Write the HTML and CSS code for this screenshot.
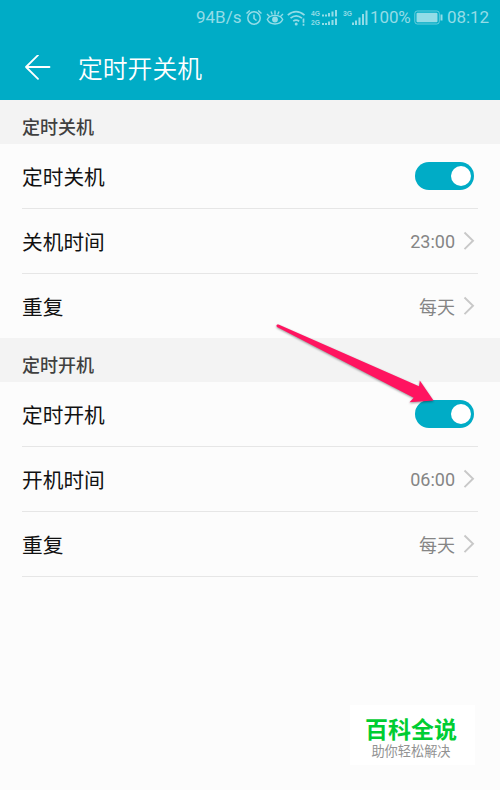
FILE: index.html
```
<!DOCTYPE html>
<html lang="zh-CN">
<head>
<meta charset="utf-8">
<title>定时开关机</title>
<link rel="stylesheet" href="styles.css">
</head>
<body>
<header class="top">
  <div class="status">
    <span class="speed">94B/s</span>
    <svg class="alarm" width="18" height="20" viewBox="0 0 18 20" fill="none" stroke="currentColor" stroke-width="1.5"><circle cx="9" cy="10" r="6.2"/><path d="M9 6.500v4l2.500 2M1.500 5.500l3.300-3M16.500 5.500l-3.300-3"/></svg>
    <svg class="eye" width="18" height="20" viewBox="0 0 18 20" fill="none" stroke="currentColor" stroke-width="1.400"><path d="M1.300 11.500C4 6 14 6 16.700 11.500C14 17.500 4 17.500 1.300 11.500ZM1 6l2.500 2.500M5 3.500l1.300 3M9 2.500v4M13 3.500l-1.300 3M17 6l-2.500 2.500"/><circle cx="9" cy="11.500" r="2.900" fill="currentColor" stroke="none"/></svg>
    <svg class="wifi" width="20" height="20" viewBox="0 0 20 20" fill="none" stroke="currentColor" stroke-width="1.700"><path d="M.8 7.200Q9 .2 17.500 7.200M3.500 10.200Q9 5.600 15 10.200M6.200 13.200Q9 11 12.200 13.200"/><circle cx="9.200" cy="16" r="1.500" fill="currentColor" stroke="none"/><path d="M16.500 10.500v4.200M16.500 15.700v2"/></svg>
    <svg class="dual" width="28" height="20" viewBox="0 0 28 20" fill="currentColor"><text class="net" x="0" y="8.300" textLength="9" lengthAdjust="spacingAndGlyphs">4G</text><text class="net" x="0" y="17.300" textLength="9" lengthAdjust="spacingAndGlyphs">2G</text><path d="M11 6.500h2v2h-2zM14 6.500h2v2h-2zM17 5h2v3.500h-2zM20.500 3.500h2v5h-2zM24 2h2v6.500h-2zM11 15h2v2h-2zM14 15h2v2h-2zM17 13.500h2V17h-2zM20.500 12h2v5h-2zM24 10.500h2V17h-2z"/></svg>
    <svg class="single" width="26" height="20" viewBox="0 0 26 20" fill="currentColor"><text class="net" x="0" y="8" textLength="9" lengthAdjust="spacingAndGlyphs">3G</text><path d="M9 14.500h2v2.500H9zM12 12.500h2V17h-2zM15.500 9.500h2V17h-2zM19 6h2v11h-2zM22.500 2.500h2V17h-2z"/></svg>
    <span class="percent">100%</span>
    <svg class="battery" width="30" height="20" viewBox="0 0 30 20" fill="none"><rect x=".8" y="3" width="24.500" height="13" rx="2.500" stroke="currentColor" stroke-width="1" opacity=".7"/><rect x="2.500" y="4.700" width="21" height="9.600" rx="1" fill="currentColor"/><path d="M26.500 6.500h2v6h-2z" fill="currentColor"/></svg>
    <span class="clock">08:12</span>
  </div>
  <div class="bar">
    <svg class="back" width="26" height="26" viewBox="0 0 26 26" fill="none" stroke="#fff" stroke-width="1.800" stroke-linecap="round" stroke-linejoin="round"><path d="M13 .2L1 12l12 11.800M1 12h23.500"/></svg>
    <h1>定时开关机</h1>
  </div>
</header>
<main>
  <section>
    <h2>定时关机</h2>
    <div class="row"><span class="label">定时关机</span><span class="toggle"></span></div>
    <div class="row"><span class="label">关机时间</span><span class="value">23:00</span><svg class="chev" width="12" height="20" viewBox="0 0 12 20"><path d="M1.500 1.500l8.500 8.300-8.500 8.300"/></svg></div>
    <div class="row last"><span class="label">重复</span><span class="value day">每天</span><svg class="chev" width="12" height="20" viewBox="0 0 12 20"><path d="M1.500 1.500l8.500 8.300-8.500 8.300"/></svg></div>
  </section>
  <section>
    <h2>定时开机</h2>
    <div class="row"><span class="label">定时开机</span><span class="toggle"></span></div>
    <div class="row"><span class="label">开机时间</span><span class="value">06:00</span><svg class="chev" width="12" height="20" viewBox="0 0 12 20"><path d="M1.500 1.500l8.500 8.300-8.500 8.300"/></svg></div>
    <div class="row"><span class="label">重复</span><span class="value day">每天</span><svg class="chev" width="12" height="20" viewBox="0 0 12 20"><path d="M1.500 1.500l8.500 8.300-8.500 8.300"/></svg></div>
  </section>
</main>
<svg class="pointer" width="170" height="90" viewBox="0 0 170 90"><path d="M7.300 4.500Q5.800 5.500 7 7L143.700 77.800L139.500 82.200L163.500 80.600L149.800 60.500L149 66.300L8.500 4.500Z"/></svg>
<aside class="mark"><strong>百科全说</strong><span>助你轻松解决</span></aside>
</body>
</html>
```

FILE: styles.css
```
* { box-sizing: border-box; }
body {
  margin: 0;
  width: 500px;
  height: 790px;
  position: relative;
  overflow: hidden;
  background: #fcfcfc;
  font-family: Roboto, "Noto Sans CJK SC", sans-serif;
}
svg { display: block; flex: none; }
.top { height: 100px; background: #00acc6; }
.status {
  height: 35px;
  display: flex;
  align-items: center;
  padding-left: 196px;
  color: #93dce7;
  font-size: 17px;
  line-height: 35px;
  white-space: nowrap;
}
.speed { width: 49px; }
.eye { margin-left: 3px; }
.wifi { margin-left: 3px; }
.dual { margin-left: 4px; }
.single { margin-left: 4px; }
.net { font: 700 8px "Liberation Sans", sans-serif; }
.percent { width: 44px; margin-left: 1px; letter-spacing: -.1px; }
.clock { margin-left: 3px; letter-spacing: -.1px; }
.bar { height: 65px; display: flex; align-items: center; padding-left: 25px; }
h1 {
  margin: 5px 0 0 27px;
  color: #fff;
  font-size: 24.800px;
  font-weight: 350;
  line-height: 60px;
}
h2 {
  margin: 0;
  height: 44px;
  padding: 6px 22px 0;
  background: #f3f3f3;
  color: #404040;
  font-size: 18px;
  font-weight: 500;
  line-height: 44px;
}
section { height: 238px; }
.row {
  height: 65px;
  margin: 0 22px;
  border-bottom: 1px solid #e6e6e6;
  display: flex;
  align-items: center;
}
.row.last { height: 64px; border-bottom: 0; }
.label { flex: 1; color: #111; font-size: 20.700px; line-height: 60px; padding-top: 4px; }
.toggle {
  width: 59px;
  height: 28px;
  margin-right: 4px;
  padding: 4px 3px;
  border-radius: 14px;
  background: #00acc6;
  display: flex;
  justify-content: flex-end;
}
.toggle::after { content: ""; width: 20px; height: 20px; border-radius: 50%; background: #fff; }
.value { margin-right: 8px; padding-top: 1px; color: #858585; font-size: 18px; }
.day { padding-top: 0; }
.chev { margin-right: 3px; fill: none; stroke: #c8c8c8; stroke-width: 1.900; }
.pointer { position: absolute; left: 270px; top: 320px; fill: #ff1460; filter: drop-shadow(0 1px 1px rgba(0, 0, 0, .4)); }
.mark {
  position: absolute;
  left: 350px;
  top: 705px;
  width: 125px;
  height: 60px;
  padding-top: 12px;
  background: #fff;
  display: flex;
  flex-direction: column;
  align-items: center;
}
.mark strong { color: #00cd32; font-size: 23px; line-height: 27px; font-weight: 700; padding-right: 3px; }
.mark span { color: #929292; font-size: 13.200px; line-height: 16px; padding-right: 3px; }
```
